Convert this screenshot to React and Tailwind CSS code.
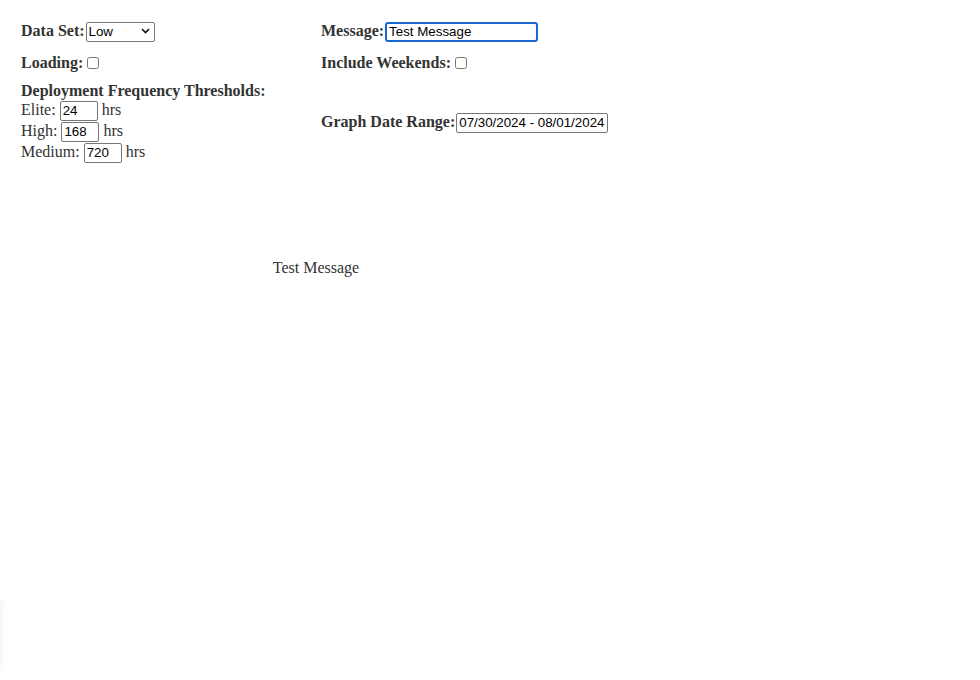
import React from 'react';

const fieldText =
  "h-[20px] px-[2px] font-['Liberation_Sans',Arial,sans-serif] text-[13.33px] leading-none text-black bg-white outline-none";
const inputBase = `${fieldText} border border-[#767676] rounded-[2px]`;

const Threshold = ({ label, value }) => (
  <div className="flex items-center h-[21px]">
    <span>{label}&nbsp;</span>
    <input
      type="text"
      defaultValue={value}
      className={`${inputBase} w-[38px]`}
    />
    <span>&nbsp;hrs</span>
  </div>
);

const App = () => {
  return (
    <div className="relative min-h-[680px] bg-white text-[#333] text-[16px] leading-[1.15] font-['Liberation_Serif','Times_New_Roman',serif] overflow-hidden">
      <div className="w-[611px] pt-[21px] pl-[21px]">
        {/* row 1 */}
        <div className="grid grid-cols-[300px_300px] h-[21px] items-center">
          <div className="flex items-center">
            <label className="font-bold">Data Set:</label>
            <div className="relative ml-px">
              <select className={`${inputBase} appearance-none w-[69px] h-[19px] pr-4`} defaultValue="Low">
                <option>Low</option>
                <option>Medium</option>
                <option>High</option>
              </select>
              <svg className="absolute right-[5px] top-[6px] pointer-events-none" width="9" height="6" viewBox="0 0 9 6">
                <path d="M1 1l3.5 3.5L8 1" fill="none" stroke="#111" strokeWidth="1.6" />
              </svg>
            </div>
          </div>
          <div className="flex items-center">
            <label className="font-bold">Message:</label>
            <input
              type="text"
              defaultValue="Test Message"
              className={`${fieldText} w-[153px] border-2 border-[#1a67d2] rounded-[3px] ml-px`}
            />
          </div>
        </div>

        {/* row 2 */}
        <div className="grid grid-cols-[300px_300px] h-[20px] items-center mt-[11px]">
          <div className="flex items-center">
            <label className="font-bold">Loading:&nbsp;</label>
            <input type="checkbox" className="w-[12px] h-[12px] m-0" />
          </div>
          <div className="flex items-center">
            <label className="font-bold">Include Weekends:&nbsp;</label>
            <input type="checkbox" className="w-[12px] h-[12px] m-0" />
          </div>
        </div>

        {/* row 3 */}
        <div className="grid grid-cols-[300px_300px] items-center mt-[9px]">
          <div className="flex flex-col">
            <div className="font-bold h-[18px]">Deployment Frequency Thresholds:</div>
            <Threshold label="Elite:" value="24" />
            <Threshold label="High:" value="168" />
            <Threshold label="Medium:" value="720" />
          </div>
          <div className="flex items-center">
            <label className="font-bold">Graph Date Range:</label>
            <input
              type="text"
              defaultValue="07/30/2024 - 08/01/2024"
              className={`${inputBase} w-[152px] ml-px`}
            />
          </div>
        </div>

        <div className="mt-[96px] text-center">Test Message</div>
      </div>
      <div className="absolute left-[-40px] top-[600px] w-[40px] h-[70px] shadow-[0_0_8px_rgba(0,0,0,0.08)]" />
    </div>
  );
};

export default App;
